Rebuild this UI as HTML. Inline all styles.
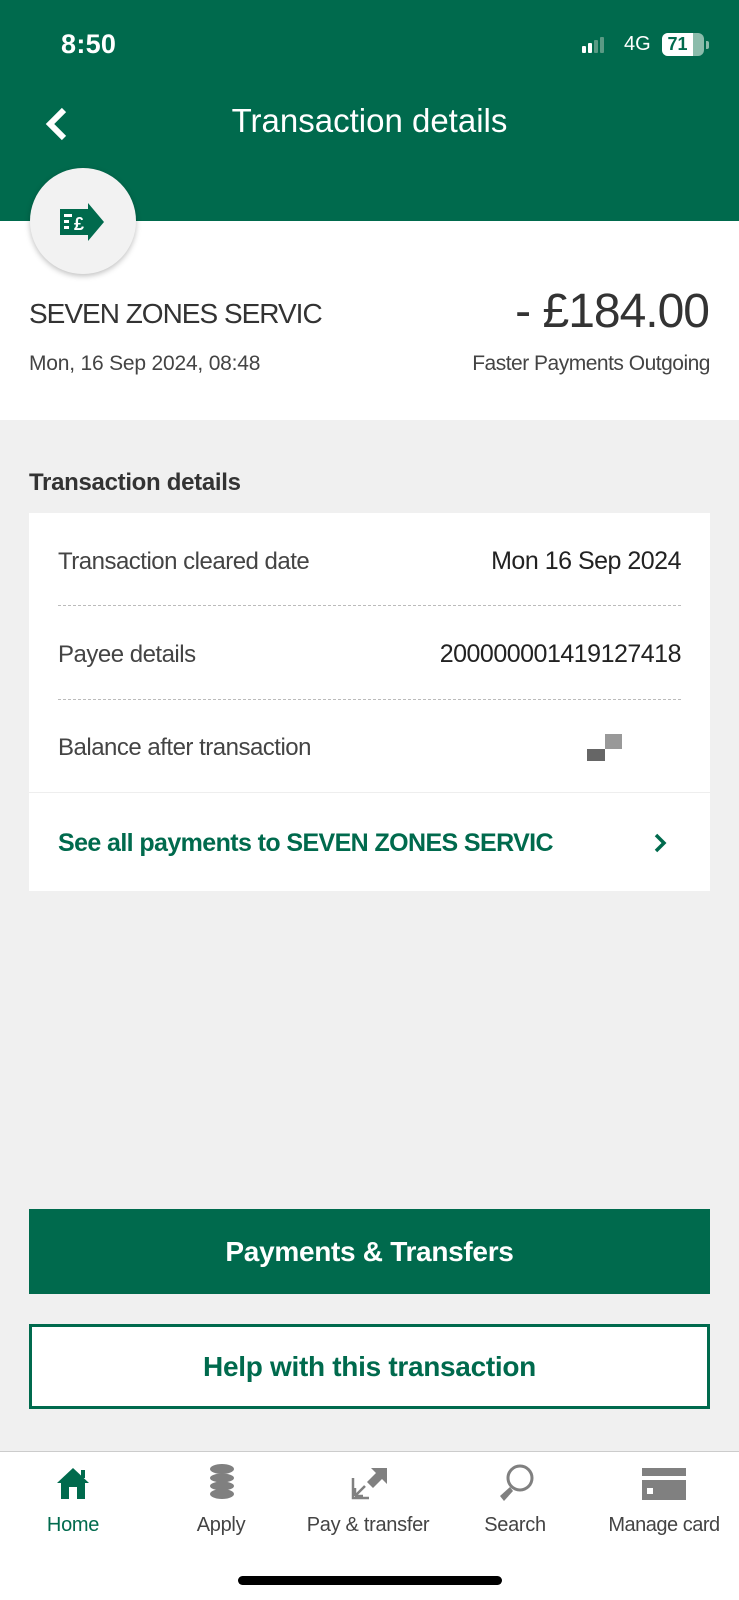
<!DOCTYPE html>
<html><head><meta charset="utf-8"><style>
*{margin:0;padding:0;box-sizing:border-box}
body{width:739px;height:1600px;background:#f0f0f0;font-family:"Liberation Sans",sans-serif;position:relative;overflow:hidden;color:#333}
.a{position:absolute;white-space:nowrap}
.g{color:#006a4d}
</style></head><body>
<div class="a" style="left:0;top:0;width:739px;height:221px;background:#006a4d"></div>
<div class="a" style="left:61px;top:29px;font-size:27px;color:#fff;font-weight:bold;letter-spacing:0.3px">8:50</div>
<div class="a" style="left:582px;top:36px;width:20px;height:18px">
 <div class="a" style="left:0;top:10px;width:4px;height:7px;background:#fff;border-radius:1px"></div>
 <div class="a" style="left:6px;top:7px;width:4px;height:10px;background:#fff;border-radius:1px"></div>
 <div class="a" style="left:12px;top:4px;width:4px;height:13px;background:#5a9a84;border-radius:1px"></div>
 <div class="a" style="left:18px;top:1px;width:4px;height:16px;background:#5a9a84;border-radius:1px"></div>
</div>
<div class="a" style="left:624px;top:33px;font-size:20px;color:#fff">4G</div>
<div class="a" style="left:662px;top:33px;width:42px;height:23px;border-radius:6px;background:#8bbcab"></div>
<div class="a" style="left:662px;top:33px;width:31px;height:23px;border-radius:6px 0 0 6px;background:#fff;color:#006a4d;font-weight:bold;font-size:18px;text-align:center;line-height:23px">71</div>
<div class="a" style="left:706px;top:41px;width:3px;height:8px;border-radius:0 2px 2px 0;background:#8bbcab"></div>
<svg class="a" style="left:42px;top:106px" width="30" height="36" viewBox="0 0 30 36"><path d="M22 4 L8 18 L22 32" stroke="#fff" stroke-width="6" fill="none" stroke-linejoin="miter"/></svg>
<div class="a" style="left:0;width:739px;top:102px;text-align:center;font-size:33px;color:#fff">Transaction details</div>
<div class="a" style="left:0;top:221px;width:739px;height:199px;background:#fff"></div>
<div class="a" style="left:30px;top:168px;width:106px;height:106px;border-radius:50%;background:#f2f2f2;box-shadow:0 2px 6px rgba(0,0,0,.25)"></div>
<svg class="a" style="left:60px;top:203px" width="46" height="38" viewBox="0 0 46 38"><path d="M0 6 H28 V0 L44 19 L28 38 V32 H0 Z" fill="#006a4d"/><rect x="4" y="11" width="8" height="3" fill="#fff"/><rect x="4" y="17" width="5" height="3" fill="#fff"/><rect x="4" y="23" width="5" height="3" fill="#fff"/><text x="14" y="27" font-size="18" font-weight="bold" fill="#fff" font-family="Liberation Sans">£</text></svg>
<div class="a" style="left:29px;top:298px;font-size:28px;color:#333;letter-spacing:-1px">SEVEN ZONES SERVIC</div>
<div class="a" style="right:30px;top:284px;font-size:48px;color:#333;letter-spacing:-1px">- £184.00</div>
<div class="a" style="left:29px;top:352px;font-size:21px;color:#444;letter-spacing:-0.2px">Mon, 16 Sep 2024, 08:48</div>
<div class="a" style="right:29px;top:352px;font-size:21px;color:#444;letter-spacing:-0.5px">Faster Payments Outgoing</div>
<div class="a" style="left:29px;top:469px;font-size:24px;color:#333;font-weight:bold;letter-spacing:-0.3px">Transaction details</div>
<div class="a" style="left:29px;top:513px;width:681px;height:378px;background:#fff"></div>
<div class="a" style="left:58px;top:548px;font-size:24px;color:#444;letter-spacing:-0.5px">Transaction cleared date</div>
<div class="a" style="right:58px;top:547px;font-size:25px;color:#222;letter-spacing:-0.5px">Mon 16 Sep 2024</div>
<div class="a" style="left:58px;top:605px;width:623px;border-top:1px dashed #bbb"></div>
<div class="a" style="left:58px;top:641px;font-size:24px;color:#444;letter-spacing:-0.5px">Payee details</div>
<div class="a" style="right:58px;top:640px;font-size:25px;color:#222;letter-spacing:-0.5px">200000001419127418</div>
<div class="a" style="left:58px;top:699px;width:623px;border-top:1px dashed #bbb"></div>
<div class="a" style="left:58px;top:734px;font-size:24px;color:#444;letter-spacing:-0.5px">Balance after transaction</div>
<div class="a" style="left:605px;top:734px;width:17px;height:15px;background:#999"></div>
<div class="a" style="left:587px;top:749px;width:18px;height:12px;background:#666"></div>
<div class="a" style="left:29px;top:792px;width:681px;border-top:1px solid #eee"></div>
<div class="a g" style="left:58px;top:829px;font-size:25px;font-weight:bold;letter-spacing:-0.6px">See all payments to SEVEN ZONES SERVIC</div>
<svg class="a" style="left:653px;top:832px" width="14" height="22" viewBox="0 0 14 22"><path d="M3 3 L11 11 L3 19" stroke="#006a4d" stroke-width="3.5" fill="none"/></svg>
<div class="a" style="left:29px;top:1209px;width:681px;height:85px;background:#006a4d;color:#fff;font-size:28px;font-weight:bold;text-align:center;line-height:85px;letter-spacing:-0.3px">Payments &amp; Transfers</div>
<div class="a g" style="left:29px;top:1324px;width:681px;height:85px;background:#fff;border:3px solid #006a4d;font-size:28px;font-weight:bold;text-align:center;line-height:79px;letter-spacing:-0.3px">Help with this transaction</div>
<div class="a" style="left:0;top:1451px;width:739px;height:149px;background:#fff;border-top:1px solid #ccc"></div>
<svg class="a" style="left:55px;top:1466px" width="36" height="34" viewBox="0 0 36 34"><path d="M18 2 L34 17 H30 V33 H22 V21 H14 V33 H6 V17 H2 Z" fill="#006a4d"/><rect x="26" y="4" width="4" height="8" fill="#006a4d"/></svg>
<svg class="a" style="left:209px;top:1464px" width="26" height="38" viewBox="0 0 26 38"><g fill="#808080"><ellipse cx="13" cy="5" rx="12" ry="5"/><ellipse cx="13" cy="14" rx="12" ry="4.5"/><ellipse cx="13" cy="22" rx="12" ry="4.5"/><ellipse cx="13" cy="30" rx="12" ry="5"/></g></svg>
<svg class="a" style="left:349px;top:1466px" width="40" height="34" viewBox="0 0 40 34"><path d="M22 2 H38 V18 L33 13 L24 22 L18 16 L27 7 Z" fill="#808080"/><path d="M4 12 V32 H20 M6 30 L16 20 M6 30 V22 M6 30 H14" stroke="#808080" stroke-width="2.5" fill="none"/></svg>
<svg class="a" style="left:496px;top:1462px" width="40" height="42" viewBox="0 0 40 42"><circle cx="24" cy="16" r="12" stroke="#808080" stroke-width="3" fill="none"/><path d="M14 25 L4 34 L8 39 L17 29 Z" fill="#808080"/></svg>
<svg class="a" style="left:642px;top:1468px" width="44" height="32" viewBox="0 0 44 32"><rect x="0" y="0" width="44" height="8" fill="#808080"/><rect x="0" y="12" width="44" height="20" fill="#808080"/><rect x="5" y="20" width="6" height="6" fill="#fff"/></svg>
<div class="a g" style="left:23px;width:100px;text-align:center;top:1514px;font-size:20px;letter-spacing:-0.3px">Home</div>
<div class="a" style="left:171px;width:100px;text-align:center;top:1514px;font-size:20px;color:#444;letter-spacing:-0.3px">Apply</div>
<div class="a" style="left:298px;width:140px;text-align:center;top:1514px;font-size:20px;color:#444;letter-spacing:-0.3px">Pay &amp; transfer</div>
<div class="a" style="left:465px;width:100px;text-align:center;top:1514px;font-size:20px;color:#444;letter-spacing:-0.3px">Search</div>
<div class="a" style="left:594px;width:140px;text-align:center;top:1514px;font-size:20px;color:#444;letter-spacing:-0.5px">Manage card</div>
<div class="a" style="left:238px;top:1576px;width:264px;height:9px;border-radius:5px;background:#000"></div>
</body></html>
